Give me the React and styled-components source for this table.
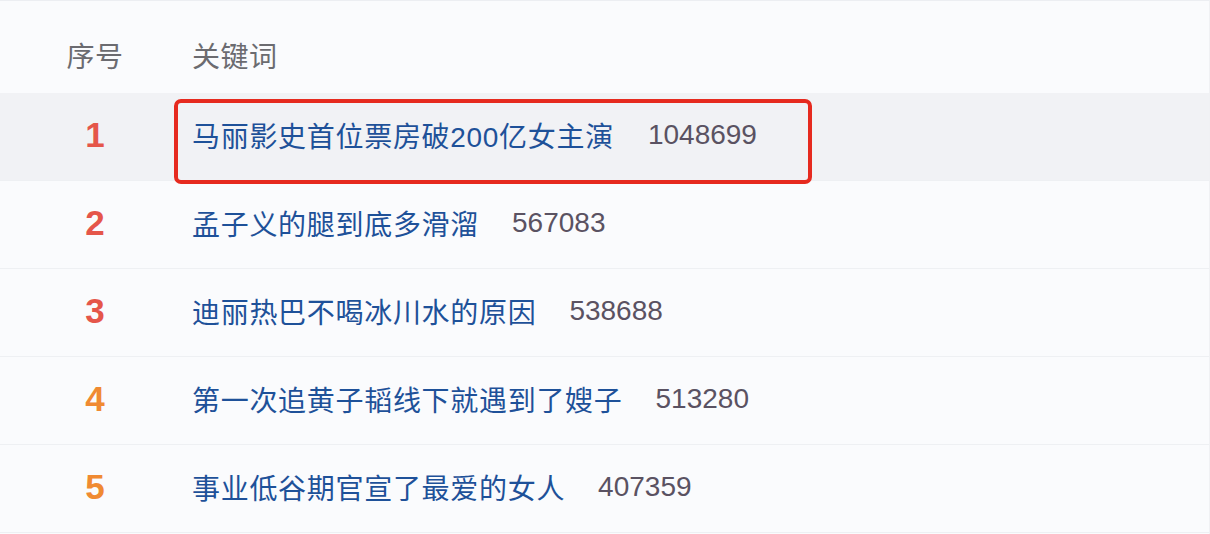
import React from "react";
import styled, { createGlobalStyle } from "styled-components";

const Global = createGlobalStyle`
  html, body { margin: 0; padding: 0; background: #fafbfd; }
  body { font-family: "Liberation Sans", "Noto Sans CJK SC", sans-serif; }
`;

const Board = styled.div`
  width: 1210px;
  height: 534px;
  box-sizing: border-box;
  background: #fafbfd;
  border-top: 1px solid #eceef2;
  border-right: 1px solid #f0f1f4;
  overflow: hidden;
  display: flex;
  flex-direction: column;
`;

const HeaderRow = styled.div`
  display: flex;
  align-items: center;
  height: 92px;
  padding-top: 16px;
  box-sizing: border-box;
  font-size: 28px;
  color: #6b6b70;
`;

const RankHead = styled.div`
  width: 190px;
  text-align: center;
  letter-spacing: 0.5px;
`;

const KeyHead = styled.div`
  padding-left: 2px;
  letter-spacing: 0.5px;
`;

const Row = styled.div`
  position: relative;
  display: flex;
  align-items: center;
  height: 88px;
  padding-bottom: 3px;
  box-sizing: border-box;
  background: ${(p) => (p.$highlight ? "#f1f2f5" : "transparent")};
  border-bottom: 1px solid #eef0f3;
`;

const Rank = styled.div`
  width: 190px;
  text-align: center;
  font-family: "Liberation Sans", Arial, sans-serif;
  font-weight: 700;
  font-size: 35px;
  color: ${(p) => (p.$top ? "#e5564a" : "#f08a32")};
`;

const Keyword = styled.span`
  padding-left: 2px;
  font-size: 28px;
  letter-spacing: 0.7px;
  color: #1e5199;
`;

const Count = styled.span`
  margin-left: ${(p) => (p.$wide ? "34px" : "33px")};
  font-size: 28px;
  color: #5a5262;
`;

const Highlight = styled.div`
  position: absolute;
  left: 174px;
  top: 6px;
  width: 638px;
  height: 85px;
  box-sizing: border-box;
  border: 4px solid #e62a1f;
  border-radius: 7px;
  z-index: 1;
  pointer-events: none;
`;

const data = [
  { k: "马丽影史首位票房破200亿女主演", n: "1048699" },
  { k: "孟子义的腿到底多滑溜", n: "567083" },
  { k: "迪丽热巴不喝冰川水的原因", n: "538688" },
  { k: "第一次追黄子韬线下就遇到了嫂子", n: "513280" },
  { k: "事业低谷期官宣了最爱的女人", n: "407359" },
];

export default function App() {
  return (
    <>
      <Global />
      <Board>
        <HeaderRow>
          <RankHead>序号</RankHead>
          <KeyHead>关键词</KeyHead>
        </HeaderRow>
        {data.map((d, i) => (
          <Row key={i} $highlight={i === 0}>
            <Rank $top={i < 3}>{i + 1}</Rank>
            <Keyword>{d.k}</Keyword>
            <Count $wide={i === 0}>{d.n}</Count>
            {i === 0 && <Highlight />}
          </Row>
        ))}
      </Board>
    </>
  );
}
